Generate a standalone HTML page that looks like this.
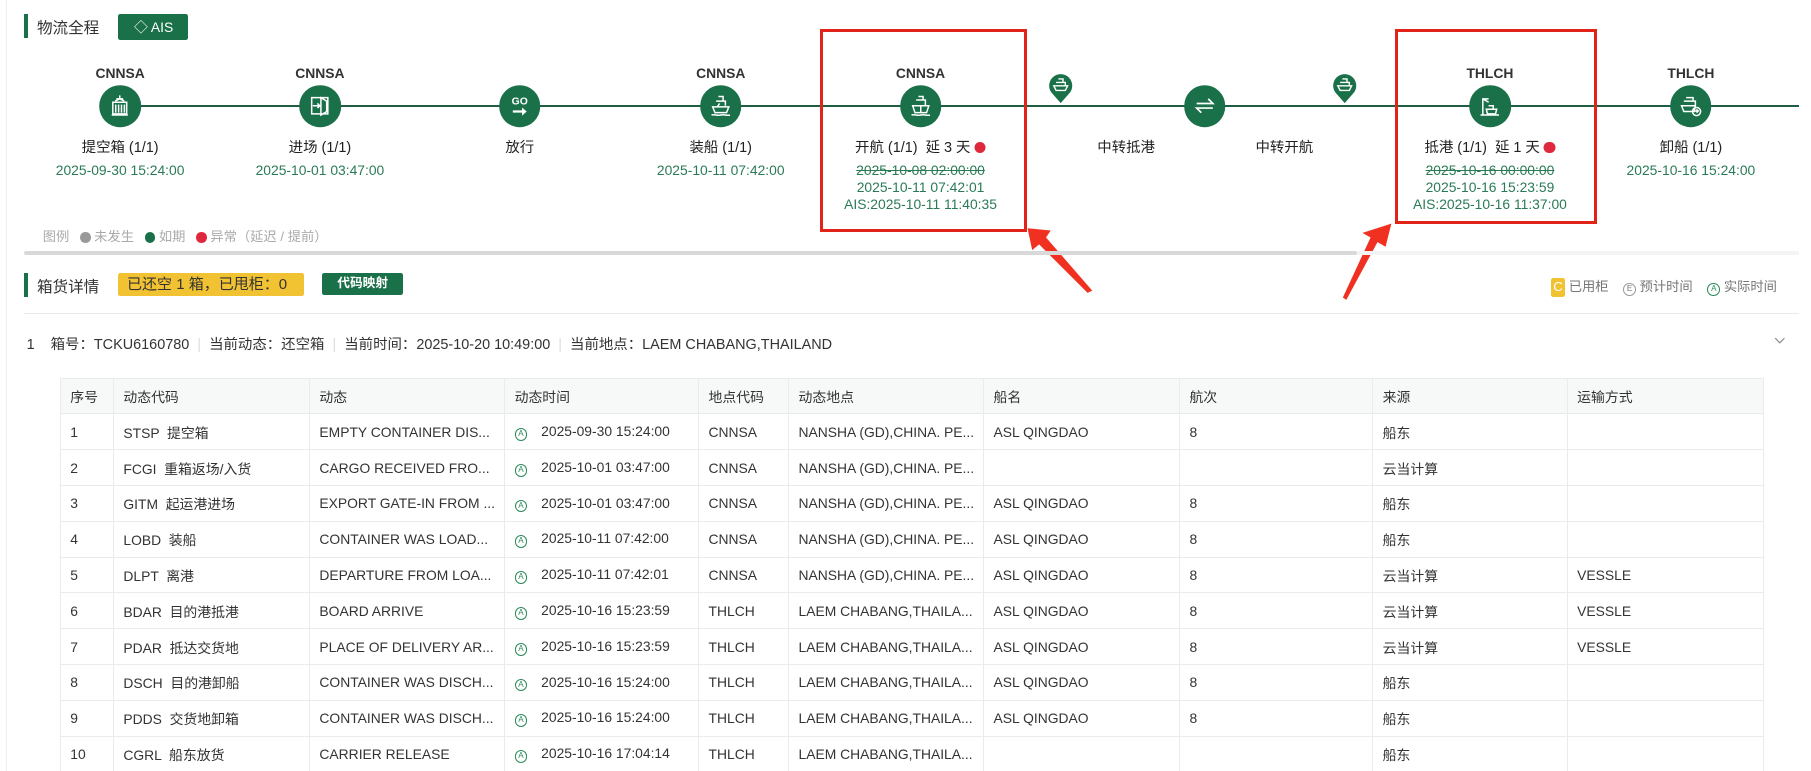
<!DOCTYPE html>
<html><head><meta charset="utf-8"><style>
*{margin:0;padding:0;box-sizing:border-box}
html,body{width:1811px;height:771px;overflow:hidden;background:#fff}
#w{zoom:1.155;width:1568px;height:668px;position:relative;font-family:"Liberation Sans","Noto Sans CJK SC",sans-serif;color:#333;font-size:12px}
.a{position:absolute;white-space:nowrap}
.c{transform:translateX(-50%);text-align:center}
.code{font-weight:bold;font-size:12px;color:#333}
.lbl{font-size:12.5px;color:#222}
.dt{font-size:12px;color:#2a7a55;line-height:15px}
.cir{position:absolute;width:36px;height:36px;border-radius:50%;background:#1a7048;transform:translate(-50%,-50%);top:92px}
.cir svg{position:absolute;left:8px;top:8px}
table{border-collapse:collapse;position:absolute;left:52px;top:327px;width:1475px;font-size:12px;color:#333}
td{border:1px solid #e8ecea;height:31px;padding:0 8px;white-space:nowrap;overflow:hidden}
tr:first-child td{background:#f7f8f8;height:31px}
.ic{display:inline-block;width:11px;height:11px;border:1px solid #2a8a5a;border-radius:50%;font-size:7px;line-height:9px;text-align:center;color:#2a8a5a;margin-right:12px;vertical-align:0px}
.dot{display:inline-block;width:9px;height:9px;border-radius:50%;vertical-align:-1px;margin-right:3px}
</style></head><body><div id="w">
<div class="a" style="left:5px;top:0;width:1px;height:668px;background:#eee"></div>
<div class="a" style="left:21px;top:12px;width:3px;height:21px;background:#1a7048"></div>
<div class="a" style="left:32px;top:14px;font-size:13.5px;color:#333">物流全程</div>
<div class="a" style="left:102px;top:12px;width:61px;height:23px;background:#1a7048;border-radius:2px;color:#fff;font-size:12px;line-height:23px;padding-left:14px">◇ AIS</div>

<div class="a" style="left:104px;top:91px;width:1454px;height:2px;background:#1f5e43"></div>

<div class="a c code" style="left:104px;top:56px">CNNSA</div>
<div class="a c code" style="left:277px;top:56px">CNNSA</div>
<div class="a c code" style="left:624px;top:56px">CNNSA</div>
<div class="a c code" style="left:797px;top:56px">CNNSA</div>
<div class="a c code" style="left:1290px;top:56px">THLCH</div>
<div class="a c code" style="left:1464px;top:56px">THLCH</div>

<div class="cir" style="left:104px"><svg width="20" height="20" viewBox="0 0 20 20" fill="none" stroke="#fff" stroke-width="1.3"><path d="M10 1v3M7 4h6M6 6l4-2 4 2M4 7h12v10H4zM6.5 9v7M9 9v7M11.5 9v7M14 9v7M3 18h14"/></svg></div>
<div class="cir" style="left:277px"><svg width="20" height="20" viewBox="0 0 20 20" fill="none" stroke="#fff" stroke-width="1.3"><path d="M3 3h14v14H3zM11 3l5 3v9l-5 3zM4 10h6M8 8l2 2-2 2"/></svg></div>
<div class="cir" style="left:450px"><svg width="20" height="20" viewBox="0 0 20 20"><text x="10" y="9" fill="#fff" font-size="9" font-weight="bold" text-anchor="middle" font-family="Liberation Sans">GO</text><path d="M4 14h8v-2.5l4 3.5-4 3.5V16H4z" fill="#fff"/></svg></div>
<div class="cir" style="left:624px"><svg width="20" height="20" viewBox="0 0 20 20" fill="none" stroke="#fff" stroke-width="1.3"><path d="M8 2h4v4M6 6h8v4M3 11h14l-2 5H5zM2 18c3-1 5 1 8 0s5 1 8 0M9 8l-2 3"/></svg></div>
<div class="cir" style="left:797px"><svg width="20" height="20" viewBox="0 0 20 20" fill="none" stroke="#fff" stroke-width="1.3"><path d="M8 2h4v3M6 5h8v5M3 10h14l-2 6H5zM10 10v6M2 18c3-1 5 1 8 0s5 1 8 0"/></svg></div>
<div class="cir" style="left:1043px"><svg width="20" height="20" viewBox="0 0 20 20" fill="none" stroke="#fff" stroke-width="1.5"><path d="M3 8h14L13 4M17 12H3l4 4"/></svg></div>
<div class="cir" style="left:1290px"><svg width="20" height="20" viewBox="0 0 20 20" fill="none" stroke="#fff" stroke-width="1.3"><path d="M4 18V4h5M4 4l5 3M9 10h4v3M7 13h9l-1 4H8zM2 18h16"/></svg></div>
<div class="cir" style="left:1464px"><svg width="20" height="20" viewBox="0 0 20 20" fill="none" stroke="#fff" stroke-width="1.3"><path d="M6 3h6v3M4 6h10v4M2 10h12l-1 5H4zM15 11.5a3.5 3.5 0 1 0 .01 0M15 13l1.5 1.5-1.5 1.5M13 14.5h3"/></svg></div>

<svg class="a" style="left:907px;top:62px" width="22" height="28" viewBox="0 0 22 28"><path d="M11 27L4 19A10 10 0 1 1 18 19z" fill="#1a7048"/><path d="M9 6h4v3M7 9h8v3M5 12h12l-2 4H7z" fill="none" stroke="#fff" stroke-width="1.2"/></svg>
<svg class="a" style="left:1153px;top:62px" width="22" height="28" viewBox="0 0 22 28"><path d="M11 27L4 19A10 10 0 1 1 18 19z" fill="#1a7048"/><path d="M9 6h4v3M7 9h8v3M5 12h12l-2 4H7z" fill="none" stroke="#fff" stroke-width="1.2"/></svg>

<div class="a c lbl" style="left:104px;top:118px">提空箱 (1/1)</div>
<div class="a c lbl" style="left:277px;top:118px">进场 (1/1)</div>
<div class="a c lbl" style="left:450px;top:118px">放行</div>
<div class="a c lbl" style="left:624px;top:118px">装船 (1/1)</div>
<div class="a c lbl" style="left:797px;top:118px">开航 (1/1) &nbsp;延 3 天 <span style="display:inline-block;width:10px;height:10px;border-radius:50%;background:#e0283c;vertical-align:-1px"></span></div>
<div class="a c lbl" style="left:975px;top:118px">中转抵港</div>
<div class="a c lbl" style="left:1112px;top:118px">中转开航</div>
<div class="a c lbl" style="left:1290px;top:118px">抵港 (1/1) &nbsp;延 1 天 <span style="display:inline-block;width:10px;height:10px;border-radius:50%;background:#e0283c;vertical-align:-1px"></span></div>
<div class="a c lbl" style="left:1464px;top:118px">卸船 (1/1)</div>

<div class="a c dt" style="left:104px;top:140px">2025-09-30 15:24:00</div>
<div class="a c dt" style="left:277px;top:140px">2025-10-01 03:47:00</div>
<div class="a c dt" style="left:624px;top:140px">2025-10-11 07:42:00</div>
<div class="a c dt" style="left:797px;top:140px"><s>2025-10-08 02:00:00</s><br>2025-10-11 07:42:01<br>AIS:2025-10-11 11:40:35</div>
<div class="a c dt" style="left:1290px;top:140px"><s>2025-10-16 00:00:00</s><br>2025-10-16 15:23:59<br>AIS:2025-10-16 11:37:00</div>
<div class="a c dt" style="left:1464px;top:140px">2025-10-16 15:24:00</div>

<div class="a" style="left:710px;top:25px;width:179px;height:176px;border:3px solid #e2231a"></div>
<div class="a" style="left:1208px;top:25px;width:175px;height:169px;border:3px solid #e2231a"></div>
<svg class="a" style="left:880px;top:190px" width="330" height="70" viewBox="0 0 330 70"><path d="M10 8L30 10 26 16 66 62 62 64 20 22 14 27z" fill="#f03020"/><path d="M325 4L320 24 313 20 286 70 283 68 307 16 300 12z" fill="#f03020"/></svg>

<div class="a" style="left:37px;top:196px;font-size:11.5px;color:#aaa">图例 &nbsp;&nbsp;<span class="dot" style="background:#999"></span>未发生 &nbsp;&nbsp;<span class="dot" style="background:#1a7048"></span>如期 &nbsp;&nbsp;<span class="dot" style="background:#e0283c"></span>异常（延迟 / 提前）</div>
<div class="a" style="left:21px;top:217px;width:1154px;height:4px;background:#d9d9d9;border-radius:2px"></div>
<div class="a" style="left:1175px;top:217px;width:383px;height:4px;background:#f4f4f4"></div>

<div class="a" style="left:21px;top:236px;width:3px;height:21px;background:#1a7048"></div>
<div class="a" style="left:32px;top:238px;font-size:13.5px">箱货详情</div>
<div class="a" style="left:102px;top:236px;width:161px;height:20px;background:#f1c232;color:#333;font-size:13px;line-height:20px;padding-left:8px;border-radius:2px">已还空 1 箱，已甩柜：0</div>
<div class="a" style="left:279px;top:236px;width:70px;height:19px;background:#1a7048;color:#fff;font-size:11px;font-weight:bold;line-height:19px;text-align:center;border-radius:2px">代码映射</div>
<div class="a" style="left:1343px;top:239px;font-size:11.5px;color:#777"><span style="display:inline-block;width:12px;height:16px;background:#f1c232;color:#fff;text-align:center;line-height:16px;border-radius:2px">C</span> 已用柜 &nbsp;&nbsp; <span style="display:inline-block;width:11px;height:11px;border:1px solid #999;border-radius:50%;font-size:7px;text-align:center;line-height:9px">E</span> 预计时间 &nbsp;&nbsp; <span style="display:inline-block;width:11px;height:11px;border:1px solid #2a8a5a;color:#2a8a5a;border-radius:50%;font-size:7px;text-align:center;line-height:9px">A</span> 实际时间</div>
<div class="a" style="left:21px;top:271px;width:1537px;height:1px;background:#eaeaea"></div>

<div class="a" style="left:23px;top:288px;font-size:12.5px;color:#333">1 &nbsp;&nbsp; 箱号：TCKU6160780 <span style="color:#ddd">&nbsp;|&nbsp;</span> 当前动态：还空箱 <span style="color:#ddd">&nbsp;|&nbsp;</span> 当前时间：2025-10-20 10:49:00 <span style="color:#ddd">&nbsp;|&nbsp;</span> 当前地点：LAEM CHABANG,THAILAND</div>
<svg class="a" style="left:1536px;top:292px" width="10" height="7" viewBox="0 0 10 7"><path d="M1 1l4 4 4-4" fill="none" stroke="#888" stroke-width="1"/></svg>

<table>
<colgroup><col style="width:46px"><col style="width:170px"><col style="width:169px"><col style="width:168px"><col style="width:78px"><col style="width:167px"><col style="width:170px"><col style="width:168px"><col style="width:169px"><col style="width:170px"></colgroup>
<tr><td>序号</td><td>动态代码</td><td>动态</td><td>动态时间</td><td>地点代码</td><td>动态地点</td><td>船名</td><td>航次</td><td>来源</td><td>运输方式</td></tr>
<tr><td>1</td><td>STSP &nbsp;提空箱</td><td>EMPTY CONTAINER DIS...</td><td><span class="ic">A</span>2025-09-30 15:24:00</td><td>CNNSA</td><td>NANSHA (GD),CHINA. PE...</td><td>ASL QINGDAO</td><td>8</td><td>船东</td><td></td></tr>
<tr><td>2</td><td>FCGI &nbsp;重箱返场/入货</td><td>CARGO RECEIVED FRO...</td><td><span class="ic">A</span>2025-10-01 03:47:00</td><td>CNNSA</td><td>NANSHA (GD),CHINA. PE...</td><td></td><td></td><td>云当计算</td><td></td></tr>
<tr><td>3</td><td>GITM &nbsp;起运港进场</td><td>EXPORT GATE-IN FROM ...</td><td><span class="ic">A</span>2025-10-01 03:47:00</td><td>CNNSA</td><td>NANSHA (GD),CHINA. PE...</td><td>ASL QINGDAO</td><td>8</td><td>船东</td><td></td></tr>
<tr><td>4</td><td>LOBD &nbsp;装船</td><td>CONTAINER WAS LOAD...</td><td><span class="ic">A</span>2025-10-11 07:42:00</td><td>CNNSA</td><td>NANSHA (GD),CHINA. PE...</td><td>ASL QINGDAO</td><td>8</td><td>船东</td><td></td></tr>
<tr><td>5</td><td>DLPT &nbsp;离港</td><td>DEPARTURE FROM LOA...</td><td><span class="ic">A</span>2025-10-11 07:42:01</td><td>CNNSA</td><td>NANSHA (GD),CHINA. PE...</td><td>ASL QINGDAO</td><td>8</td><td>云当计算</td><td>VESSLE</td></tr>
<tr><td>6</td><td>BDAR &nbsp;目的港抵港</td><td>BOARD ARRIVE</td><td><span class="ic">A</span>2025-10-16 15:23:59</td><td>THLCH</td><td>LAEM CHABANG,THAILA...</td><td>ASL QINGDAO</td><td>8</td><td>云当计算</td><td>VESSLE</td></tr>
<tr><td>7</td><td>PDAR &nbsp;抵达交货地</td><td>PLACE OF DELIVERY AR...</td><td><span class="ic">A</span>2025-10-16 15:23:59</td><td>THLCH</td><td>LAEM CHABANG,THAILA...</td><td>ASL QINGDAO</td><td>8</td><td>云当计算</td><td>VESSLE</td></tr>
<tr><td>8</td><td>DSCH &nbsp;目的港卸船</td><td>CONTAINER WAS DISCH...</td><td><span class="ic">A</span>2025-10-16 15:24:00</td><td>THLCH</td><td>LAEM CHABANG,THAILA...</td><td>ASL QINGDAO</td><td>8</td><td>船东</td><td></td></tr>
<tr><td>9</td><td>PDDS &nbsp;交货地卸箱</td><td>CONTAINER WAS DISCH...</td><td><span class="ic">A</span>2025-10-16 15:24:00</td><td>THLCH</td><td>LAEM CHABANG,THAILA...</td><td>ASL QINGDAO</td><td>8</td><td>船东</td><td></td></tr>
<tr><td>10</td><td>CGRL &nbsp;船东放货</td><td>CARRIER RELEASE</td><td><span class="ic">A</span>2025-10-16 17:04:14</td><td>THLCH</td><td>LAEM CHABANG,THAILA...</td><td></td><td></td><td>船东</td><td></td></tr>
</table>
</div></body></html>
